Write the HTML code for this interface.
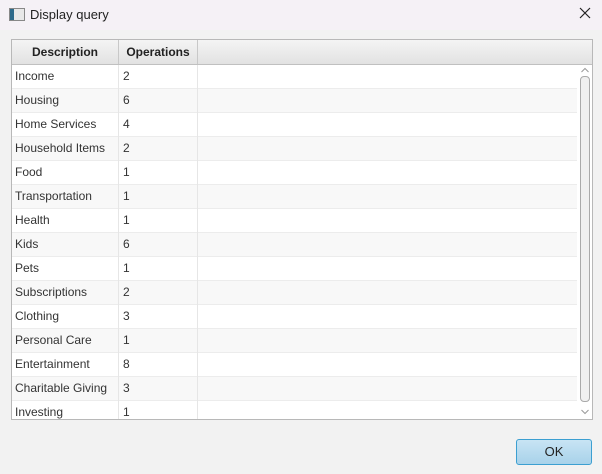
<!DOCTYPE html>
<html><head><style>
body{margin:0;width:602px;height:474px;background:#f2f2f2;font-family:"Liberation Sans",sans-serif;position:relative;overflow:hidden}
.tb{position:absolute;left:0;top:0;width:602px;height:30px;background:#f5f1f6}
.tb .t{position:absolute;left:30px;top:7px;font-size:13px;color:#222}
.ic{position:absolute;left:9px;top:8px;width:14px;height:11px;border:1px solid #888;background:linear-gradient(90deg,#2d6a8a 0 4px,#e8e8e8 4px)}
.tbl{position:absolute;left:11px;top:39px;width:580px;height:379px;border:1px solid #b8b8b8;background:#fff;overflow:hidden}
.hd{height:24px;background:linear-gradient(#f4f4f4,#e2e2e2);border-bottom:1px solid #c0c0c0;position:relative}
.hd div{position:absolute;top:0;height:24px;line-height:24px;font-weight:bold;font-size:12px;color:#222;text-align:center;border-right:1px solid #c8c8c8}
.r{height:23px;border-bottom:1px solid #ececec;position:relative;font-size:12px;color:#333;line-height:23px}
.r span{position:absolute;top:0}
.c1{left:3px}.c2{left:111px}
.v1{position:absolute;left:106px;top:25px;width:1px;height:360px;background:#e6e6e6}
.v2{position:absolute;left:185px;top:25px;width:1px;height:360px;background:#e6e6e6}
.sb{position:absolute;left:565px;top:25px;width:15px;height:354px;background:#fff}
.th{position:absolute;left:3px;top:11px;width:8px;height:324px;border:1px solid #aaa;border-radius:4px;background:#f0f0f0}
.ok{position:absolute;left:516px;top:439px;width:74px;height:24px;border:1px solid #3c9fd1;border-radius:3px;background:linear-gradient(#c8e4f4,#a8d2ea);font-size:13px;text-align:center;line-height:24px;color:#222}
</style></head><body>
<div class="tb"><div class="ic"></div><div class="t">Display query</div>
<svg style="position:absolute;left:579px;top:7px" width="12" height="12"><path d="M1 1L11 11M11 1L1 11" stroke="#222" stroke-width="1.2"/></svg></div>
<div class="tbl">
<div class="hd"><div style="left:0;width:106px">Description</div><div style="left:107px;width:78px">Operations</div></div>
<div>
<div class="r" style="background:#fff"><span class="c1">Income</span><span class="c2">2</span></div>
<div class="r" style="background:#f8f8f8"><span class="c1">Housing</span><span class="c2">6</span></div>
<div class="r" style="background:#fff"><span class="c1">Home Services</span><span class="c2">4</span></div>
<div class="r" style="background:#f8f8f8"><span class="c1">Household Items</span><span class="c2">2</span></div>
<div class="r" style="background:#fff"><span class="c1">Food</span><span class="c2">1</span></div>
<div class="r" style="background:#f8f8f8"><span class="c1">Transportation</span><span class="c2">1</span></div>
<div class="r" style="background:#fff"><span class="c1">Health</span><span class="c2">1</span></div>
<div class="r" style="background:#f8f8f8"><span class="c1">Kids</span><span class="c2">6</span></div>
<div class="r" style="background:#fff"><span class="c1">Pets</span><span class="c2">1</span></div>
<div class="r" style="background:#f8f8f8"><span class="c1">Subscriptions</span><span class="c2">2</span></div>
<div class="r" style="background:#fff"><span class="c1">Clothing</span><span class="c2">3</span></div>
<div class="r" style="background:#f8f8f8"><span class="c1">Personal Care</span><span class="c2">1</span></div>
<div class="r" style="background:#fff"><span class="c1">Entertainment</span><span class="c2">8</span></div>
<div class="r" style="background:#f8f8f8"><span class="c1">Charitable Giving</span><span class="c2">3</span></div>
<div class="r" style="background:#fff"><span class="c1">Investing</span><span class="c2">1</span></div>
</div>
<div class="v1"></div><div class="v2"></div>
<div class="sb"><svg style="position:absolute;left:4px;top:2px" width="8" height="6"><path d="M0.5 5L4 1.5L7.5 5" stroke="#999" fill="none"/></svg><div class="th"></div><svg style="position:absolute;left:4px;top:344px" width="8" height="6"><path d="M0.5 1L4 4.5L7.5 1" stroke="#999" fill="none"/></svg></div>
</div>
<div class="ok">OK</div>
</body></html>
